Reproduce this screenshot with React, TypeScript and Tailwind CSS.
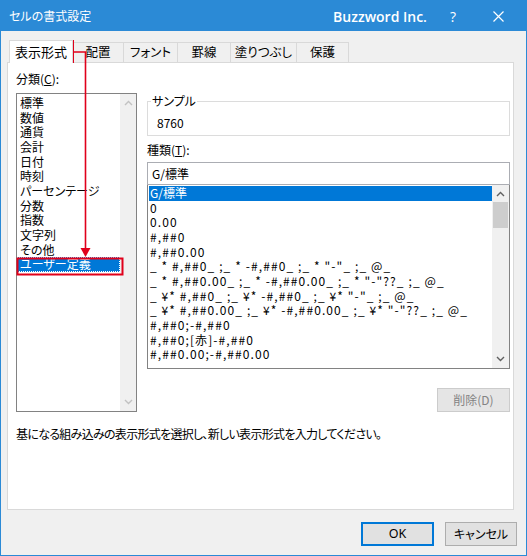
import React from 'react';

const JP = { fontFamily: '"Noto Sans CJK JP", "Noto Sans", sans-serif', fontFeatureSettings: '"palt"' };

const categories = [
  '標準', '数値', '通貨', '会計', '日付', '時刻', 'パーセンテージ', '分数', '指数', '文字列', 'その他', 'ユーザー定義',
];

const formats = [
  'G/標準',
  '0',
  '0.00',
  '#,##0',
  '#,##0.00',
  '_ * #,##0_ ;_ * -#,##0_ ;_ * "-"_ ;_ @_',
  '_ * #,##0.00_ ;_ * -#,##0.00_ ;_ * "-"??_ ;_ @_',
  '_ ¥* #,##0_ ;_ ¥* -#,##0_ ;_ ¥* "-"_ ;_ @_',
  '_ ¥* #,##0.00_ ;_ ¥* -#,##0.00_ ;_ ¥* "-"??_ ;_ @_',
  '#,##0;-#,##0',
  '#,##0;[赤]-#,##0',
  '#,##0.00;-#,##0.00',
];

const tabs = ['表示形式', '配置', 'フォント', '罫線', '塗りつぶし', '保護'];
const tabWidths = ['w-[64px]', 'w-[51px]', 'w-[54px]', 'w-[53px]', 'w-[66px]', 'w-[52px]'];

function Chevron({ up, color }: { up?: boolean; color: string }) {
  return (
    <svg width="9" height="6" viewBox="0 0 9 6">
      <path d={up ? 'M1 5 L4.5 1.5 L8 5' : 'M1 1 L4.5 4.5 L8 1'} fill="none" stroke={color} strokeWidth="1.4" />
    </svg>
  );
}

export default function App() {
  return (
    <div className="relative w-[527px] h-[556px] bg-[#f0f0f0] border border-[#2b8ad6] flex flex-col text-[12px] text-black" style={JP}>
      {/* title bar */}
      <div className="h-[30px] bg-[#2b8ad6] flex items-center text-white shrink-0">
        <span className="pl-[8px] text-[12px]">セルの書式設定</span>
        <span className="ml-auto text-[14px] font-semibold" style={{ fontFamily: '"Open Sans", sans-serif' }}>
          Buzzword Inc.
        </span>
        <span className="ml-[23px] text-[14px]" style={{ fontFamily: '"Open Sans", sans-serif' }}>?</span>
        <svg className="ml-[37px] mr-[22px]" width="11" height="11" viewBox="0 0 11 11">
          <path d="M0.5 0.5 L10.5 10.5 M10.5 0.5 L0.5 10.5" stroke="white" strokeWidth="1.2" />
        </svg>
      </div>

      {/* tabs */}
      <div className="flex items-end pl-[8px] pt-[9px] h-[31px] shrink-0">
        {tabs.map((t, i) => (
          <div
            key={t}
            className={
              i === 0
                ? `${tabWidths[i]} h-[23px] bg-white border border-[#d9d9d9] border-b-0 relative z-10 -mb-px flex items-center justify-center text-[13px]`
                : `${tabWidths[i]} h-[20px] bg-[#f0f0f0] border border-[#d9d9d9] border-l-0 border-b-0 flex items-center justify-center text-[12.5px]`
            }
          >
            {t}
          </div>
        ))}
      </div>

      {/* panel */}
      <div className="ml-[6px] w-[507px] h-[448px] bg-white border border-[#d9d9d9] flex flex-col pl-[8px] pt-[8px] shrink-0">
        <div className="flex gap-[10px]">
          {/* category column */}
          <div className="w-[121px] flex flex-col">
            <div className="h-[16px] leading-[16px]">
              分類(<span className="underline">C</span>):
            </div>
            <div className="mt-[6px] h-[319px] border border-[#828282] flex">
              <div className="flex-1 pt-[2px] overflow-hidden">
                {categories.map((c, i) => (
                  <div
                    key={c}
                    className={
                      i === categories.length - 1
                        ? 'h-[14.67px] leading-[14.67px] pl-[3px] bg-[#0078d7] text-white whitespace-nowrap outline-1 outline-dotted outline-offset-[-1px] outline-white'
                        : 'h-[14.67px] leading-[14.67px] pl-[3px] whitespace-nowrap'
                    }
                  >
                    {c}
                  </div>
                ))}
              </div>
              <div className="w-[16px] bg-[#f0f0f0] flex flex-col items-center justify-between py-[6px]">
                <Chevron up color="#c2c2c2" />
                <Chevron color="#c2c2c2" />
              </div>
            </div>
          </div>

          {/* type column */}
          <div className="w-[363px] flex flex-col">
            <div className="relative mt-[30px] h-[35px] border border-[#dcdcdc] pl-[9px] pt-[13px] leading-[16px]">
              <span className="absolute -top-[9px] left-[3px] bg-white px-[1px] leading-[16px]">サンプル</span>
              8760
            </div>
            <div className="mt-[6px] h-[16px] leading-[16px]">
              種類(<span className="underline">T</span>):
            </div>
            <div className="mt-[4px] h-[23px] border border-[#abadb3] pl-[4px] leading-[21px]">G/標準</div>
            <div className="h-[184px] border border-t-0 border-[#828282] flex">
              <div className="flex-1 pt-[1px] pl-[1px] overflow-hidden">
                {formats.map((f, i) => (
                  <div
                    key={f}
                    className={
                      i === 0
                        ? 'h-[14.67px] leading-[14.67px] pl-[1px] bg-[#0078d7] text-white whitespace-pre'
                        : 'h-[14.67px] leading-[14.67px] pl-[1px] whitespace-pre tracking-[1.1px]'
                    }
                  >
                    {f}
                  </div>
                ))}
              </div>
              <div className="w-[17px] bg-[#f0f0f0] flex flex-col items-center pt-[6px] pb-[6px]">
                <Chevron up color="#606060" />
                <div className="mt-[5px] w-[15px] h-[26px] bg-[#cdcdcd]" />
                <div className="mt-auto">
                  <Chevron color="#606060" />
                </div>
              </div>
            </div>
            <div className="mt-[19px] self-end w-[73px] h-[24px] border border-[#cccccc] bg-[#e5e5e5] text-[#838383] flex items-center justify-center">
              削除(D)
            </div>
          </div>
        </div>
        <div className="mt-[14px] leading-[16px] tracking-[-0.7px]">基になる組み込みの表示形式を選択し、新しい表示形式を入力してください。</div>
      </div>

      {/* buttons */}
      <div className="flex justify-end gap-[11px] pr-[9px] mt-[12px]">
        <div className="w-[73px] h-[24px] border-2 border-[#0078d7] bg-[#e1e1e1] flex items-center justify-center text-[12.5px]" style={{ fontFamily: '"Noto Sans", sans-serif' }}>
          OK
        </div>
        <div className="w-[72px] h-[24px] border border-[#adadad] bg-[#e1e1e1] flex items-center justify-center">
          キャンセル
        </div>
      </div>

      {/* red annotations */}
      <svg className="absolute left-0 top-0 pointer-events-none" width="527" height="300" viewBox="0 0 527 300">
        <rect x="10" y="40" width="62" height="21" fill="none" stroke="#e0001b" strokeWidth="2" />
        <path d="M72 51 H84.5 V248" fill="none" stroke="#e0001b" strokeWidth="1.6" />
        <path d="M79.5 247 H89.5 L84.5 256 Z" fill="#e0001b" />
        <rect x="16.5" y="257.5" width="105" height="16" fill="none" stroke="#e0001b" strokeWidth="2" />
      </svg>
    </div>
  );
}
